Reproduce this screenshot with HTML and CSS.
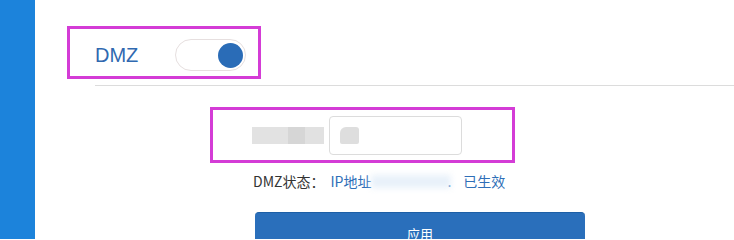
FILE: index.html
```html
<!DOCTYPE html>
<html lang="zh-CN">
<head>
<meta charset="utf-8">
<title>DMZ</title>
<link rel="stylesheet" href="styles.css">
</head>
<body>
<div class="page">
  <aside class="sidebar"></aside>
  <main class="main">
    <div class="head-box">
      <span class="head-title">DMZ</span>
      <span class="switch"><span class="knob"></span></span>
    </div>
    <div class="divider"></div>
    <div class="field-box">
      <div class="label-blur"><span class="b1"></span><span class="b2"></span><span class="b3"></span></div>
      <div class="input"><span class="input-blur"></span></div>
    </div>
    <div class="status">
      <span class="status-label">DMZ状态：</span><span class="status-ip">IP地址</span><span class="ip-haze"></span><span class="status-ip">.</span><span class="status-ok">已生效</span>
    </div>
    <button class="apply">应用</button>
  </main>
</div>
</body>
</html>
```

FILE: styles.css
```css
html, body {
  margin: 0;
  padding: 0;
  background: #fff;
  overflow: hidden;
}
.page {
  display: flex;
  height: 239px;
  overflow: hidden;
  font-family: "Noto Sans CJK SC", "Liberation Sans", sans-serif;
}
.sidebar {
  width: 35px;
  flex: none;
  background: #1c83db;
}
.main {
  flex: 1;
  display: flex;
  flex-direction: column;
  align-items: flex-start;
}
.main > * { flex: none; }
.head-box {
  margin: 26px 0 0 32px;
  border: 3px solid #d43cd6;
  display: flex;
  align-items: center;
  padding: 5px 0 0 25px;
  width: 163px;
  height: 42px;
}
.head-title {
  font-family: "Liberation Sans", sans-serif;
  font-size: 20px;
  color: #3069b0;
  width: 80px;
}
.switch {
  width: 67px;
  height: 30px;
  border: 1px solid #e6dfdf;
  border-radius: 16px;
  display: flex;
  align-items: center;
  justify-content: flex-end;
  padding-right: 2px;
}
.knob {
  width: 25px;
  height: 25px;
  border-radius: 50%;
  background: #2a6cb7;
}
.divider {
  margin: 6px 0 0 60px;
  align-self: stretch;
  height: 1px;
  background: #dcdcdc;
}
.field-box {
  margin: 21px 0 0 175px;
  width: 299px;
  height: 50px;
  border: 3px solid #d43cd6;
  display: flex;
  align-items: center;
}
.label-blur {
  margin-left: 39px;
  display: flex;
  height: 17px;
  filter: blur(0.6px);
}
.label-blur span { display: block; height: 17px; }
.b1 { width: 36px; background: #e2e2e2; }
.b2 { width: 17px; background: #d6d6d6; }
.b3 { width: 19px; background: #e1e1e1; }
.input {
  margin-left: 5px;
  width: 131px;
  height: 37px;
  border: 1px solid #dcdcdc;
  border-radius: 4px;
  display: flex;
  align-items: center;
}
.input-blur {
  margin-left: 10px;
  width: 19px;
  height: 17px;
  background: #dedede;
  border-radius: 6px 3px 2px 2px;
  filter: blur(0.5px);
}
.status {
  margin: 8px 0 0 218px;
  font-size: 14px;
  line-height: 20px;
  display: flex;
  align-items: center;
  white-space: nowrap;
}
.status-label { color: #333; margin-right: 6px; }
.status-ip { color: #2f6fb8; }
.ip-haze {
  display: inline-block;
  width: 80px;
  height: 13px;
  margin: 0 -4px 0 0;
  background: #e8f1fa;
  filter: blur(3px);
}
.status-ok { color: #2f6fb8; margin-left: 12px; }
.apply {
  margin: 21px 0 0 220px;
  width: 330px;
  height: 42px;
  border: none;
  border-top: 1px solid #1d5fa6;
  border-radius: 4px;
  background: #2a6fbb;
  color: #fff;
  font-family: "Noto Sans CJK SC", sans-serif;
  font-size: 13px;
  padding: 0;
}
```
